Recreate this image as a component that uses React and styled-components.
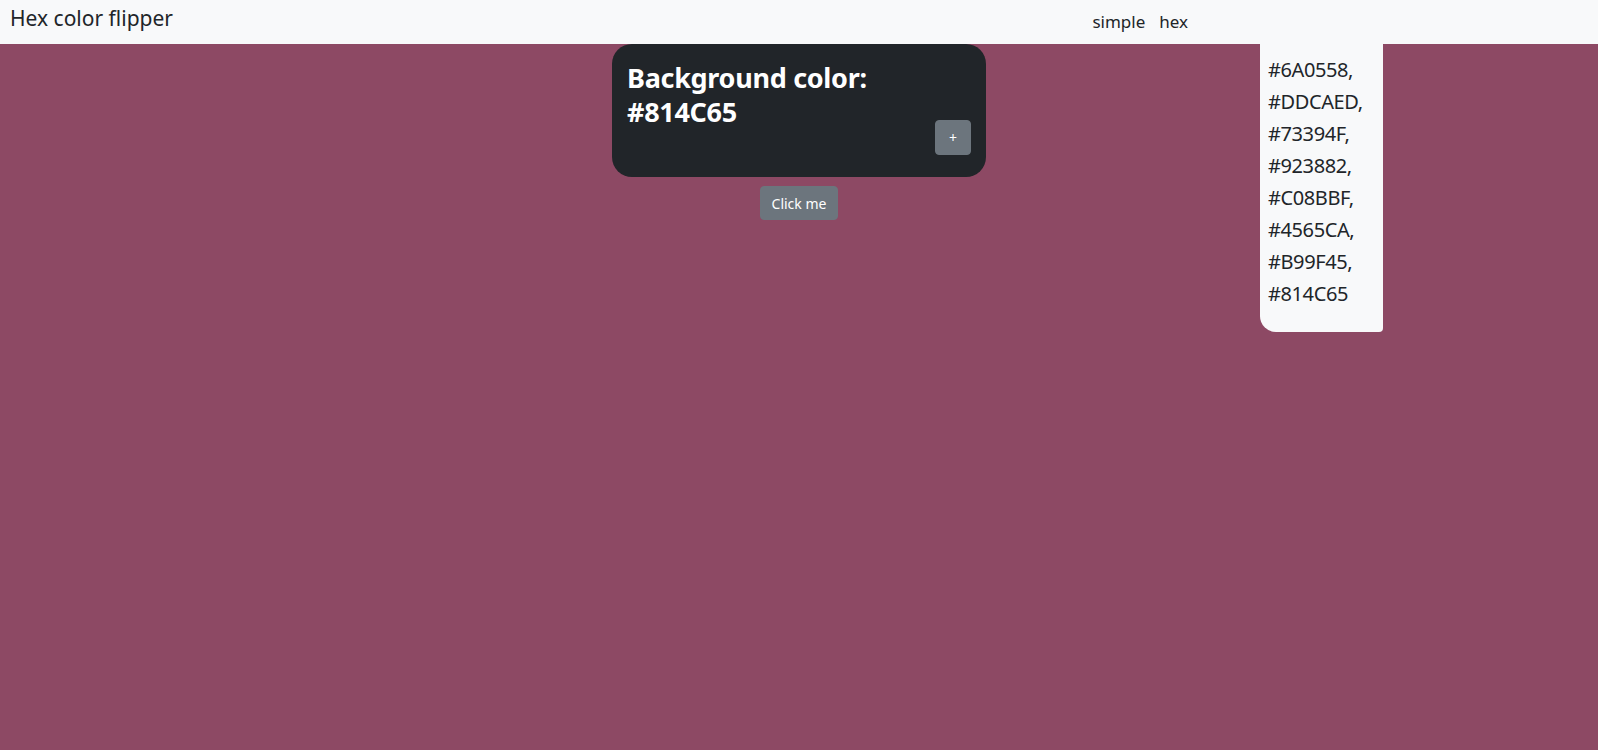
import React, { useState } from "react";
import styled, { createGlobalStyle } from "styled-components";

const GlobalStyle = createGlobalStyle`
  * {
    box-sizing: border-box;
  }
  body {
    margin: 0;
    font-family: "Noto Sans", "Open Sans", sans-serif;
    color: #212529;
    background: #8d4964;
  }
`;

const colors = [
  "#6A0558",
  "#DDCAED",
  "#73394F",
  "#923882",
  "#C08BBF",
  "#4565CA",
  "#B99F45",
  "#814C65",
];

const Page = styled.div`
  min-height: 100vh;
  display: flex;
  flex-direction: column;
`;

const Navbar = styled.nav`
  height: 44px;
  display: flex;
  align-items: center;
  padding: 0 10px;
  background: #f8f9fa;
`;

const Brand = styled.a`
  font-size: 21px;
  line-height: 30px;
  margin-bottom: 8px;
  color: #212529;
  text-decoration: none;
`;

const Links = styled.div`
  display: flex;
  gap: 14px;
  margin-left: auto;
  margin-right: 400px;
`;

const NavLink = styled.a`
  font-size: 17px;
  line-height: 24px;
  color: #212529;
  text-decoration: none;
`;

const Main = styled.main`
  flex: 1;
  display: grid;
  grid-template-columns: 1fr 374px 1fr;
  align-items: start;
  background: ${(p) => p.bg};
`;

const Center = styled.div`
  display: flex;
  flex-direction: column;
  align-items: center;
  gap: 9px;
`;

const Card = styled.div`
  width: 100%;
  height: 133px;
  display: flex;
  justify-content: space-between;
  align-items: flex-end;
  padding: 17px 15px 16px;
  background: #212529;
  border-radius: 20px;
`;

const Heading = styled.h3`
  align-self: flex-start;
  margin: 0;
  font-size: 27px;
  line-height: 34px;
  font-weight: 700;
  letter-spacing: -0.3px;
  color: #fff;
`;

const Button = styled.button`
  height: ${(p) => (p.small ? "35px" : "34px")};
  padding: 0 ${(p) => (p.small ? "13px" : "11px")};
  margin-bottom: ${(p) => (p.small ? "6px" : "0")};
  font-family: inherit;
  font-size: 14px;
  color: #fff;
  background: #6c757d;
  border: 1px solid #6c757d;
  border-radius: 4px;
  cursor: pointer;
`;

const History = styled.ul`
  justify-self: start;
  width: 123px;
  margin: 0 0 0 274px;
  padding: 10px 8px 22px;
  list-style: none;
  background: #f8f9fa;
  border-radius: 0 0 4px 16px;
`;

const HistoryItem = styled.li`
  font-size: 20px;
  line-height: 32px;
  white-space: nowrap;
  letter-spacing: -0.4px;
`;

export default function App() {
  const [bg, setBg] = useState("#8d4964");

  return (
    <>
      <GlobalStyle />
      <Page>
        <Navbar>
          <Brand href="#">Hex color flipper</Brand>
          <Links>
            <NavLink href="#">simple</NavLink>
            <NavLink href="#">hex</NavLink>
          </Links>
        </Navbar>
        <Main bg={bg}>
          <div />
          <Center>
            <Card>
              <Heading>
                Background color:
                <br />
                #814C65
              </Heading>
              <Button small>+</Button>
            </Card>
            <Button onClick={() => setBg(bg)}>Click me</Button>
          </Center>
          <History>
            {colors.map((c, i) => (
              <HistoryItem key={c}>
                {c}
                {i < colors.length - 1 ? "," : ""}
              </HistoryItem>
            ))}
          </History>
        </Main>
      </Page>
    </>
  );
}
